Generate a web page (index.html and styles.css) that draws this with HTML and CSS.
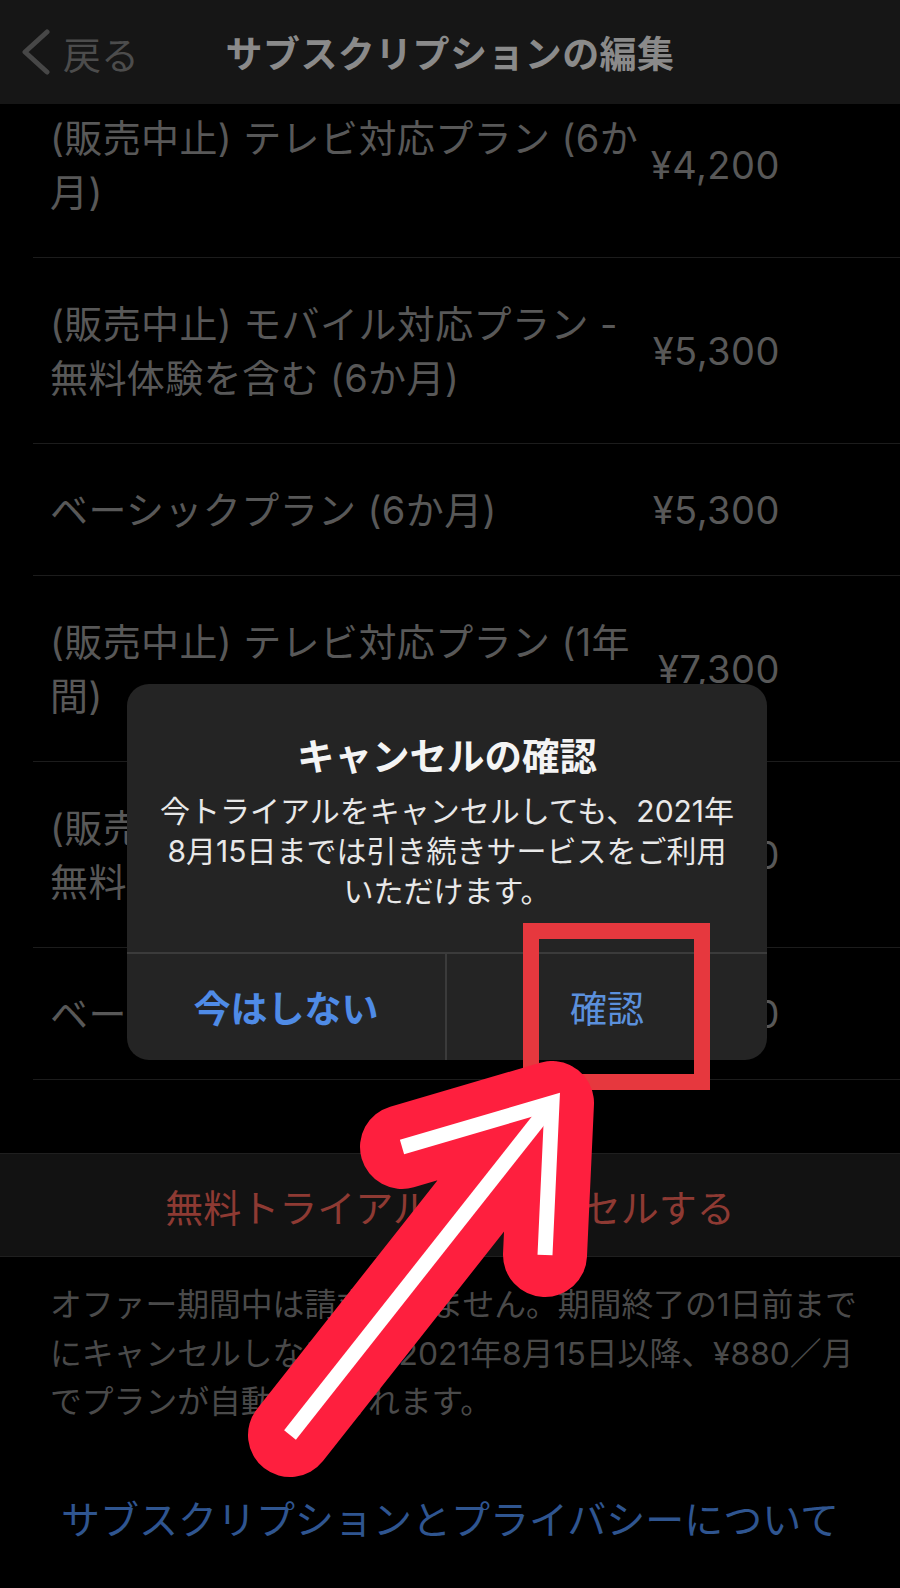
FILE: index.html
```html
<!DOCTYPE html>
<html lang="ja">
<head>
<meta charset="utf-8">
<title>サブスクリプションの編集</title>
<link rel="stylesheet" href="styles.css">
</head>
<body>
<div class="page">
  <header class="navbar">
    <div class="back">
      <svg class="chevron" width="30" height="48" viewBox="0 0 30 48"><polyline points="27,4 5,24 27,44" fill="none" stroke="#474747" stroke-width="5" stroke-linecap="round" stroke-linejoin="round"/></svg>
      <span>戻る</span>
    </div>
    <div class="nav-title">サブスクリプションの編集</div>
    <div></div>
  </header>

  <div class="list">
    <div class="row"><div class="row-name">(販売中止) テレビ対応プラン (6か<br>月)</div><div class="row-price">¥4,200</div></div>
    <div class="row"><div class="row-name">(販売中止) モバイル対応プラン -<br>無料体験を含む (6か月)</div><div class="row-price">¥5,300</div></div>
    <div class="row"><div class="row-name">ベーシックプラン (6か月)</div><div class="row-price">¥5,300</div></div>
    <div class="row"><div class="row-name">(販売中止) テレビ対応プラン (1年<br>間)</div><div class="row-price">¥7,300</div></div>
    <div class="row"><div class="row-name">(販売中止) モバイル対応プラン -<br>無料体験を含む (1年間)</div><div class="row-price">¥9,800</div></div>
    <div class="row"><div class="row-name">ベーシックプラン (1年間)</div><div class="row-price">¥9,800</div></div>
  </div>

  <div class="cancel-band">無料トライアルをキャンセルする</div>

  <p class="footer-note">オファー期間中は請求されません。期間終了の1日前まで<br>にキャンセルしないと、2021年8月15日以降、¥880／月<br>でプランが自動更新されます。</p>

  <div class="privacy-link">サブスクリプションとプライバシーについて</div>

  <div class="alert">
    <div class="alert-body">
      <div class="alert-title">キャンセルの確認</div>
      <div class="alert-msg">今トライアルをキャンセルしても、2021年<br>8月15日までは引き続きサービスをご利用<br>いただけます。</div>
    </div>
    <div class="alert-actions">
      <div class="alert-btn alert-btn-cancel">今はしない</div>
      <div class="alert-btn alert-btn-ok">確認</div>
    </div>
  </div>

  <div class="highlight-box"></div>

  <svg class="arrow" width="900" height="1588" viewBox="0 0 900 1588">
    <path d="M290 1435 L552 1103 M402 1147 L552 1103 L545 1255" fill="none" stroke="#fe1f3e" stroke-width="84" stroke-linecap="round" stroke-linejoin="round"/>
    <path d="M290 1435 L549 1107" fill="none" stroke="#ffffff" stroke-width="15" stroke-linecap="butt"/>
    <path d="M402 1147 L552 1103 L545 1255" fill="none" stroke="#ffffff" stroke-width="15" stroke-linecap="butt" stroke-linejoin="miter"/>
  </svg>
</div>
</body>
</html>
```

FILE: styles.css
```css
html, body {
  margin: 0;
  padding: 0;
  background: #000;
}

body {
  font-family: "Inter", "Noto Sans CJK JP", sans-serif;
}

.page {
  position: relative;
  width: 900px;
  height: 1588px;
  overflow: hidden;
  background: #000;
}

.navbar {
  position: relative;
  z-index: 2;
  height: 104px;
  background: #161616;
  display: grid;
  grid-template-columns: 1fr auto 1fr;
  align-items: center;
}

.back {
  display: flex;
  align-items: center;
  gap: 13px;
  padding-left: 20px;
  color: #4c4c4c;
  font-size: 38px;
}

.chevron {
  display: block;
}

.nav-title {
  font-size: 37px;
  font-weight: 700;
  color: #8a8a8a;
  letter-spacing: 0.4px;
}

.list {
  margin-top: -32px;
}

.row {
  display: flex;
  align-items: center;
  margin-left: 33px;
  padding: 38.5px 0 38.5px 17px;
  border-bottom: 1px solid #1c1c1c;
}

.row-name {
  flex: 1;
  font-size: 38px;
  letter-spacing: 0.4px;
  line-height: 54px;
  color: #585858;
  white-space: nowrap;
}

.row-price {
  width: 150px;
  margin-right: 120px;
  text-align: right;
  font-size: 38px;
  letter-spacing: 0.5px;
  line-height: 54px;
  color: #585858;
}

.cancel-band {
  margin-top: 73px;
  height: 102px;
  background: #121212;
  border-top: 1px solid #1f1f1f;
  border-bottom: 1px solid #1f1f1f;
  display: flex;
  align-items: center;
  justify-content: center;
  font-size: 38px;
  color: #8e3a33;
}

.footer-note {
  margin: 0;
  padding: 24px 50px 0;
  font-size: 31.8px;
  line-height: 48.5px;
  color: #4a4a4a;
  white-space: nowrap;
}

.privacy-link {
  margin-top: 68px;
  text-align: center;
  font-size: 39px;
  line-height: 50px;
  color: #2f5590;
}

.alert {
  position: absolute;
  left: 127px;
  top: 684px;
  width: 640px;
  background: #242424;
  border-radius: 22px;
  overflow: hidden;
  z-index: 3;
}

.alert-body {
  padding: 50px 20px 41px;
  text-align: center;
}

.alert-title {
  font-size: 37.5px;
  font-weight: 700;
  line-height: 46px;
  color: #f4f4f4;
}

.alert-msg {
  margin-top: 11px;
  font-size: 30px;
  line-height: 40px;
  color: #e8e8e8;
  white-space: nowrap;
}

.alert-actions {
  display: grid;
  grid-template-columns: 1fr 1fr;
  height: 106px;
  border-top: 2px solid #3b3b3b;
}

.alert-btn {
  display: flex;
  align-items: center;
  justify-content: center;
  font-size: 37px;
  color: #4f8be6;
}

.alert-btn-cancel {
  font-weight: 700;
  border-right: 2px solid #3b3b3b;
}

.alert-btn-ok {
  font-weight: 400;
  color: #5b90dc;
}

.highlight-box {
  position: absolute;
  left: 523px;
  top: 923px;
  width: 187px;
  height: 167px;
  box-sizing: border-box;
  border: 16px solid #e6383e;
  z-index: 4;
}

.arrow {
  position: absolute;
  left: 0;
  top: 0;
  z-index: 5;
  pointer-events: none;
}
```
